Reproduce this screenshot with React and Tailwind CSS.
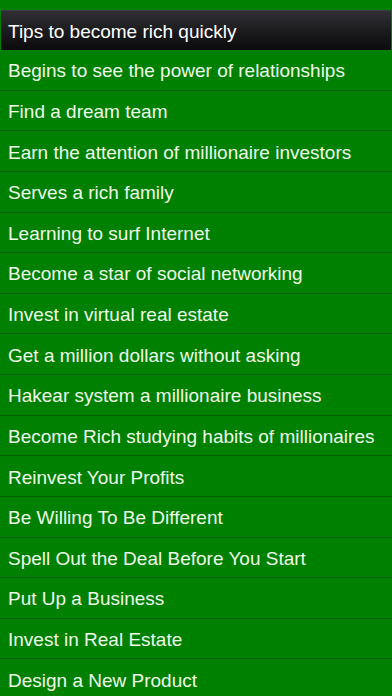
import React from 'react';

const tips = [
    "Begins to see the power of relationships",
    "Find a dream team",
    "Earn the attention of millionaire investors",
    "Serves a rich family",
    "Learning to surf Internet",
    "Become a star of social networking",
    "Invest in virtual real estate",
    "Get a million dollars without asking",
    "Hakear system a millionaire business",
    "Become Rich studying habits of millionaires",
    "Reinvest Your Profits",
    "Be Willing To Be Different",
    "Spell Out the Deal Before You Start",
    "Put Up a Business",
    "Invest in Real Estate",
    "Design a New Product",
];

function App() {
    return (
        <div
            className="w-[392px] h-[696px] overflow-hidden bg-[#008000] pt-[10px]"
            style={{ fontFamily: '"Liberation Sans", Arial, sans-serif' }}
        >
            <div className="h-[40px] mx-px flex items-center px-[7px] pt-[2px] border-t border-[#3c3c40] bg-linear-to-b from-[#303034] via-[#1c1c1f] to-[#0b0b0c]">
                <span className="text-white text-[19px] leading-none">
                    Tips to become rich quickly
                </span>
            </div>

            <ul className="flex flex-col">
                {tips.map((tip) => (
                    <li
                        key={tip}
                        className="h-[40.64px] shrink-0 flex items-center px-[8px] pt-[2px] border-b border-[#005e00]"
                    >
                        <span className="text-[#eefbe9] text-[19px] leading-none whitespace-nowrap">
                            {tip}
                        </span>
                    </li>
                ))}
            </ul>
        </div>
    );
}

export default App;
